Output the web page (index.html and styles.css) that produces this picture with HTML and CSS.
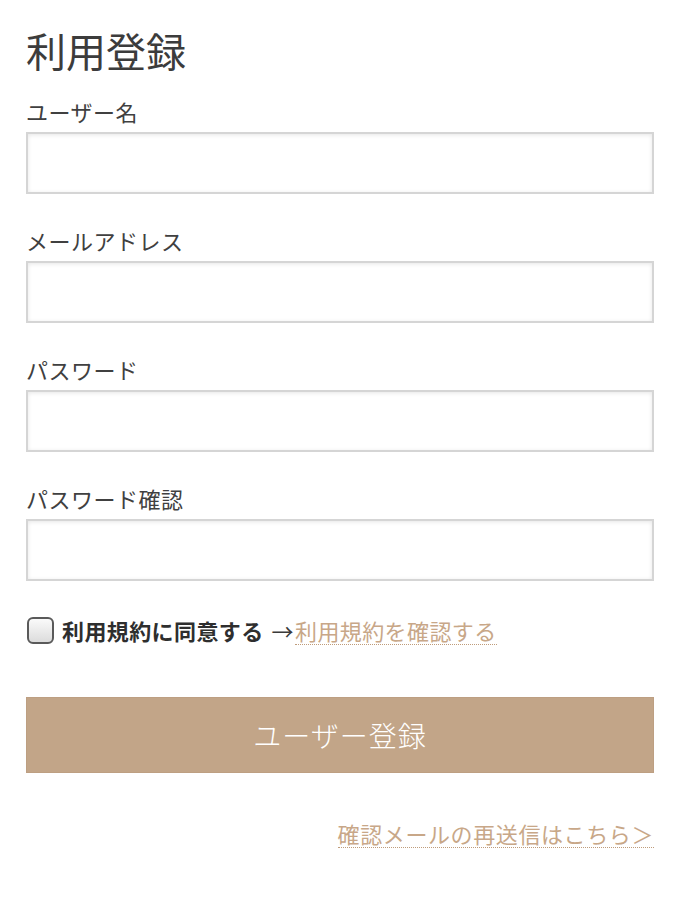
FILE: index.html
```html
<!DOCTYPE html>
<html lang="ja">
<head>
<meta charset="utf-8">
<title>利用登録</title>
<link rel="stylesheet" href="styles.css">
</head>
<body>
<main class="page">
  <h1 class="title">利用登録</h1>
  <form class="form">
    <div class="field">
      <label class="label" for="name">ユーザー名</label>
      <input class="input" id="name" type="text">
    </div>
    <div class="field">
      <label class="label" for="email">メールアドレス</label>
      <input class="input" id="email" type="email">
    </div>
    <div class="field">
      <label class="label" for="pw">パスワード</label>
      <input class="input" id="pw" type="password">
    </div>
    <div class="field">
      <label class="label" for="pw2">パスワード確認</label>
      <input class="input" id="pw2" type="password">
    </div>
    <div class="agree">
      <span class="checkbox"></span>
      <span class="agree-text">利用規約に同意する</span>
      <span class="arrow">→</span><a class="link" href="#">利用規約を確認する</a>
    </div>
    <button class="submit" type="button">ユーザー登録</button>
    <div class="resend">
      <a class="link" href="#">確認メールの再送信はこちら＞</a>
    </div>
  </form>
</main>
</body>
</html>
```

FILE: styles.css
```css
html, body {
  margin: 0;
  padding: 0;
  background: #fff;
}
body {
  font-family: "Noto Sans CJK JP", "Noto Sans", sans-serif;
  color: #3a3a3a;
}
.page {
  padding: 26px 26px 0 26px;
}
.title {
  margin: 0;
  font-size: 40px;
  line-height: 48px;
  font-weight: 400;
  color: #3c3c3c;
}
.form {
  margin-top: 21px;
  display: flex;
  flex-direction: column;
}
.field {
  display: flex;
  flex-direction: column;
  gap: 5px;
  margin-bottom: 30px;
}
.label {
  font-size: 22px;
  line-height: 32px;
  letter-spacing: 0.5px;
  color: #404040;
}
.input {
  box-sizing: border-box;
  width: 100%;
  height: 62px;
  margin: 0;
  border: 2px solid #d5d5d5;
  border-radius: 0;
  background: #fff;
  box-shadow: inset 0 1px 4px rgba(0, 0, 0, 0.1);
  font-size: 20px;
}
.agree {
  display: flex;
  align-items: center;
  margin-top: 3px;
  height: 32px;
  font-size: 22px;
  line-height: 32px;
  letter-spacing: 0.4px;
}
.checkbox {
  box-sizing: border-box;
  width: 27px;
  height: 27px;
  margin-left: 1px;
  margin-right: 8px;
  border: 2px solid #5a5a5a;
  border-radius: 6px;
  background: linear-gradient(#fafafa, #dcdcdc);
}
.agree-text {
  font-weight: 700;
  color: #2e2e2e;
}
.arrow {
  color: #3a3a3a;
  margin-left: 8px;
  margin-right: 1px;
}
.link {
  color: #c8a788;
  text-decoration: none;
  border-bottom: 1px dotted #bf9c7b;
  line-height: 28px;
}
.submit {
  margin-top: 51px;
  height: 76px;
  width: 100%;
  border: 1px solid #bd9f82;
  background: #c2a588;
  color: #fff;
  font-family: "Noto Sans CJK JP", "Noto Sans", sans-serif;
  font-size: 28px;
  font-weight: 300;
  letter-spacing: 1px;
  cursor: pointer;
}
.resend {
  margin-top: 46px;
  display: flex;
  justify-content: flex-end;
  font-size: 22px;
  line-height: 32px;
  letter-spacing: 0.6px;
}
```
